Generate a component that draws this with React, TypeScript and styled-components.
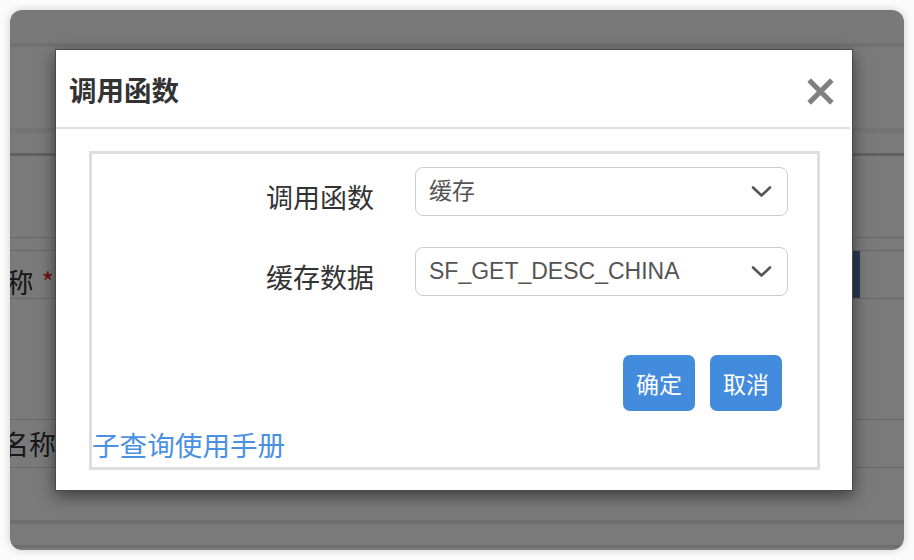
import React from "react";
import styled, { createGlobalStyle } from "styled-components";

const GlobalStyle = createGlobalStyle`
  html, body {
    margin: 0;
    padding: 0;
    background: #ffffff;
  }
  body {
    font-family: "Liberation Sans", "Noto Sans CJK SC", sans-serif;
  }
  * {
    box-sizing: border-box;
  }
`;

const Screen = styled.div`
  width: 914px;
  height: 560px;
  padding: 10px;
  background: #fbfbfb;
`;

const Window = styled.div`
  position: relative;
  width: 894px;
  height: 540px;
  border-radius: 12px;
  overflow: hidden;
  background: #ffffff;
  box-shadow: 0 0 8px rgba(0, 0, 0, 0.18);
`;

/* the page that sits under the dimmed overlay */
const Page = styled.div`
  display: flex;
  flex-direction: column;
  height: 100%;
`;

const Band = styled.div<{ $h: number; $bg?: string; $line?: string }>`
  height: ${(p) => p.$h}px;
  flex: none;
  background: ${(p) => p.$bg || "#ffffff"};
  border-bottom: ${(p) => (p.$line ? `1px solid ${p.$line}` : "none")};
`;

const FieldRow = styled.div<{ $h: number }>`
  height: ${(p) => p.$h}px;
  flex: none;
  display: flex;
  align-items: center;
  border-bottom: 1px solid #dcdcdc;
`;

const PageLabel = styled.div<{ $w: number; $shift?: number }>`
  width: ${(p) => p.$w}px;
  flex: none;
  display: flex;
  justify-content: flex-end;
  white-space: nowrap;
  margin-top: ${(p) => (p.$shift || 0) * 2}px;
  font-family: "Noto Sans CJK SC", sans-serif;
  font-size: 27px;
  line-height: 36px;
  color: #333;
`;

const Required = styled.span`
  color: #e8222a;
  margin-left: 8px;
`;

const PageInput = styled.div<{ $filled?: boolean }>`
  margin-left: auto;
  margin-right: 44px;
  width: 320px;
  height: 100%;
  background: ${(p) => (p.$filled ? "#5a7fae" : "transparent")};
`;

const Overlay = styled.div`
  position: absolute;
  inset: 0;
  background: rgba(0, 0, 0, 0.52);
`;

const Modal = styled.div`
  position: absolute;
  left: 45px;
  top: 39px;
  width: 798px;
  height: 442px;
  background: #ffffff;
  border: 1px solid #4a4a4a;
  box-shadow: 0 5px 15px rgba(0, 0, 0, 0.5);
  display: flex;
  flex-direction: column;
`;

const Header = styled.div`
  height: 79px;
  flex: none;
  display: flex;
  align-items: center;
  justify-content: space-between;
  padding: 0 16px 0 13px;
  border-bottom: 2px solid #dddddd;
  margin-right: 2px;
`;

const Title = styled.h4`
  margin: 0;
  font-family: "Noto Sans CJK SC", sans-serif;
  font-size: 27.5px;
  line-height: 36px;
  font-weight: 700;
  color: #333333;
`;

const CloseButton = styled.button`
  width: 27px;
  height: 27px;
  padding: 0;
  margin-top: 6px;
  border: none;
  background: none;
  display: flex;
  align-items: center;
  justify-content: center;
  cursor: pointer;
`;

const Body = styled.div`
  flex: 1;
  padding: 22px 32px 20px 33px;
  display: flex;
`;

const Frame = styled.div`
  flex: 1;
  border: 3px solid #dedede;
  display: flex;
  flex-direction: column;
  padding-top: 13px;
`;

const FormGrid = styled.div`
  display: grid;
  grid-template-columns: 282px 373px;
  column-gap: 41px;
  row-gap: 31px;
`;

const Label = styled.label`
  align-self: center;
  padding-top: 10px;
  text-align: right;
  font-family: "Noto Sans CJK SC", sans-serif;
  font-size: 27px;
  line-height: 36px;
  color: #333333;
`;

const Select = styled.div`
  height: 49px;
  border: 1px solid #cccccc;
  border-radius: 8px;
  display: flex;
  align-items: center;
  justify-content: space-between;
  padding: 0 15px 0 13px;
  font-size: 23px;
  color: #555555;
`;

const SelectValue = styled.span`
  line-height: 30px;
  margin-top: -2px;
`;

const Actions = styled.div`
  display: flex;
  justify-content: flex-end;
  gap: 15px;
  margin-top: 59px;
  padding-right: 35px;
`;

const Button = styled.button`
  width: 72px;
  height: 56px;
  border: none;
  border-radius: 7px;
  background: #438bdc;
  color: #ffffff;
  font-family: "Noto Sans CJK SC", sans-serif;
  font-size: 23px;
  padding: 0;
  cursor: pointer;
`;

const ManualLink = styled.a`
  margin-top: 15px;
  padding-left: 0;
  font-family: "Noto Sans CJK SC", sans-serif;
  font-size: 27.6px;
  line-height: 37px;
  color: #4a90e2;
  text-decoration: none;
`;

const Chevron = () => (
  <svg width="21" height="13" viewBox="0 0 21 13">
    <polyline
      points="2,2.5 10.5,10.5 19,2.5"
      fill="none"
      stroke="#555"
      strokeWidth="2.6"
      strokeLinecap="round"
      strokeLinejoin="round"
    />
  </svg>
);

const CloseIcon = () => (
  <svg width="27" height="27" viewBox="0 0 27 27">
    <path
      d="M4 4 L23 23 M23 4 L4 23"
      stroke="#808080"
      strokeWidth="5.2"
      strokeLinecap="square"
    />
  </svg>
);

const fields = [
  { label: "调用函数", value: "缓存" },
  { label: "缓存数据", value: "SF_GET_DESC_CHINA" },
];

export default function App() {
  return (
    <>
      <GlobalStyle />
      <Screen>
        <Window>
          <Page>
            <Band $h={33} $bg="#fdfdfd" />
            <Band $h={4} $bg="#efefef" />
            <Band $h={81} />
            <Band $h={5} $bg="#f3f3f3" />
            <Band $h={20} />
            <Band $h={3} $bg="#c9c9c9" />
            <Band $h={82} $line="#dcdcdc" />
            <Band $h={13} $line="#dcdcdc" />
            <FieldRow $h={48}>
              <PageLabel $w={44} $shift={7}>
                称<Required>*</Required>
              </PageLabel>
              <PageInput $filled />
            </FieldRow>
            <Band $h={121} $line="#dcdcdc" />
            <FieldRow $h={48}>
              <PageLabel $w={46}>名称</PageLabel>
              <PageInput />
            </FieldRow>
            <Band $h={52} />
            <Band $h={4} $bg="#e6e6e6" />
            <Band $h={21} />
            <Band $h={3} $bg="#e6e6e6" />
          </Page>
          <Overlay />
          <Modal>
            <Header>
              <Title>调用函数</Title>
              <CloseButton aria-label="close">
                <CloseIcon />
              </CloseButton>
            </Header>
            <Body>
              <Frame>
                <FormGrid>
                  {fields.map((f) => (
                    <React.Fragment key={f.label}>
                      <Label>{f.label}</Label>
                      <Select>
                        <SelectValue>{f.value}</SelectValue>
                        <Chevron />
                      </Select>
                    </React.Fragment>
                  ))}
                </FormGrid>
                <Actions>
                  <Button>确定</Button>
                  <Button>取消</Button>
                </Actions>
                <ManualLink href="#">子查询使用手册</ManualLink>
              </Frame>
            </Body>
          </Modal>
        </Window>
      </Screen>
    </>
  );
}
